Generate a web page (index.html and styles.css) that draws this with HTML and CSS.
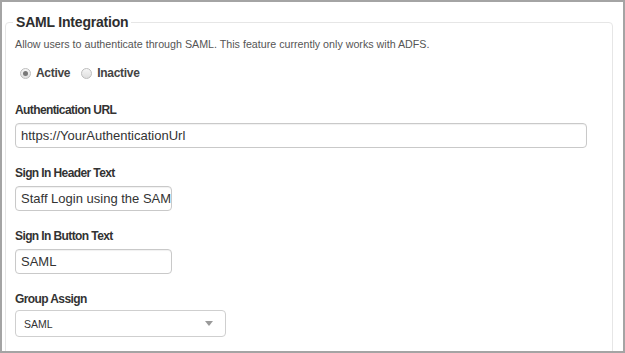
FILE: index.html
```html
<!DOCTYPE html>
<html>
<head>
<meta charset="utf-8">
<link rel="stylesheet" href="styles.css">
</head>
<body>
<div class="frame">
  <fieldset class="panel">
    <legend class="panel-title">SAML Integration</legend>
    <p class="desc">Allow users to authenticate through SAML. This feature currently only works with ADFS.</p>
    <div class="radios">
      <label class="radio"><span class="dot checked"></span>Active</label>
      <label class="radio"><span class="dot"></span>Inactive</label>
    </div>
    <div class="field">
      <div class="label">Authentication URL</div>
      <div class="input wide">https://YourAuthenticationUrl</div>
    </div>
    <div class="field">
      <div class="label">Sign In Header Text</div>
      <div class="input short">Staff Login using the SAM</div>
    </div>
    <div class="field">
      <div class="label">Sign In Button Text</div>
      <div class="input short">SAML</div>
    </div>
    <div class="field">
      <div class="label">Group Assign</div>
      <div class="select"><span>SAML</span><span class="caret"></span></div>
    </div>
  </fieldset>
</div>
</body>
</html>
```

FILE: styles.css
```css
html, body {
  margin: 0;
  padding: 0;
  background: #ffffff;
  overflow: hidden;
}
.frame {
  width: 625px;
  height: 353px;
  box-sizing: border-box;
  border: 2px solid #a4a4a4;
  background: #fff;
  overflow: hidden;
  font-family: "Liberation Sans", Arial, sans-serif;
  color: #333;
}
.panel {
  margin: 10px 10px 0 3px;
  padding: 0 9px 40px 9px;
  border: 1px solid #e6e6e6;
  border-radius: 4px;
  min-height: 380px;
}
.panel-title {
  margin-left: -2px;
  padding: 0 3px;
  font-size: 14px;
  line-height: 20px;
  font-weight: bold;
  color: #2e2e2e;
  letter-spacing: -0.2px;
}
.desc {
  margin: 4px 0 0 0;
  font-size: 10.7px;
  line-height: 16px;
  color: #555;
}
.radios {
  display: flex;
  align-items: center;
  margin-top: 13px;
  height: 16px;
  padding-left: 5px;
  gap: 11px;
}
.radio {
  display: flex;
  align-items: center;
  gap: 5px;
  font-size: 12px;
  font-weight: bold;
  color: #444;
  letter-spacing: -0.3px;
}
.dot {
  width: 9px;
  height: 9px;
  border-radius: 50%;
  border: 1px solid #bdbdbd;
  background: linear-gradient(#f6f6f6, #dedede);
  position: relative;
  box-sizing: content-box;
}
.dot.checked::after {
  content: "";
  position: absolute;
  left: 2px;
  top: 2px;
  width: 5px;
  height: 5px;
  border-radius: 50%;
  background: #777;
}
.field {
  margin-top: 21px;
}
.field + .field {
  margin-top: 17px;
}
.label {
  font-size: 12px;
  line-height: 16px;
  font-weight: bold;
  color: #333;
  letter-spacing: -0.6px;
}
.input {
  margin-top: 5px;
  box-sizing: border-box;
  height: 25px;
  border: 1px solid #c9c9c9;
  border-radius: 4px;
  box-shadow: inset 0 1px 1px rgba(0,0,0,0.06);
  padding: 0 5px;
  font-size: 13px;
  line-height: 23px;
  color: #333;
  white-space: nowrap;
  overflow: hidden;
}
.wide { width: 572px; }
.short { width: 157px; }
.select {
  margin-top: 3px;
  box-sizing: border-box;
  width: 211px;
  height: 27px;
  border: 1px solid #cfcfcf;
  border-radius: 4px;
  padding: 0 12px 0 8px;
  display: flex;
  align-items: center;
  justify-content: space-between;
  font-size: 10.5px;
  color: #333;
  background: #fff;
}
.caret {
  width: 0;
  height: 0;
  border-left: 4.5px solid transparent;
  border-right: 4.5px solid transparent;
  border-top: 5px solid #9a9a9a;
}
```
